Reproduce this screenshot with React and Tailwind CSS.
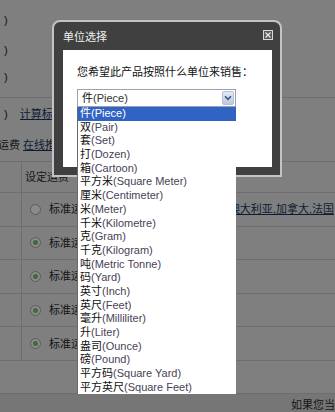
import React from "react";

const units = [
  ["件", "Piece"],
  ["双", "Pair"],
  ["套", "Set"],
  ["打", "Dozen"],
  ["箱", "Cartoon"],
  ["平方米", "Square Meter"],
  ["厘米", "Centimeter"],
  ["米", "Meter"],
  ["千米", "Kilometre"],
  ["克", "Gram"],
  ["千克", "Kilogram"],
  ["吨", "Metric Tonne"],
  ["码", "Yard"],
  ["英寸", "Inch"],
  ["英尺", "Feet"],
  ["毫升", "Milliliter"],
  ["升", "Liter"],
  ["盎司", "Ounce"],
  ["磅", "Pound"],
  ["平方码", "Square Yard"],
  ["平方英尺", "Square Feet"],
];

function Radio({ checked }) {
  return (
    <span className="w-[11px] h-[11px] shrink-0 rounded-full border border-[#5c5c5c] bg-[#8a8a8a] flex items-center justify-center">
      {checked && <span className="w-[5px] h-[5px] rounded-full bg-[#3d6b3d]" />}
    </span>
  );
}

function TableRow({ checked, children }) {
  return (
    <div className="h-[33.6px] border-b border-[#6e6e6e] flex">
      <div className="w-[21px]" />
      <div className="flex-1 border-l border-[#6e6e6e] flex items-center pl-[8px]">
        <Radio checked={checked} />
        <span className="ml-[8px] w-[28px] shrink-0 overflow-hidden whitespace-nowrap">标准运</span>
        {children}
      </div>
    </div>
  );
}

export default function App() {
  return (
    <div
      className="w-[335px] h-[412px] relative overflow-hidden bg-[#7f7f7f] text-[11px] leading-[14px] text-[#141414]"
      style={{ fontFamily: '"Liberation Sans", "Noto Sans CJK SC", sans-serif' }}
    >
      {/* dimmed page underneath */}
      <div className="flex flex-col">
        <div className="h-[97px] flex flex-col pl-[4px]">
          <span className="mt-[13px]">)</span>
          <span className="mt-[16px]">)</span>
          <span className="mt-[13px]">)</span>
        </div>
        <div className="h-[32px] border-t border-[#6e6e6e] flex items-center pl-[4px]">
          <span>)</span>
          <span className="ml-[12px] w-[33px] overflow-hidden underline text-[#0e1c36] whitespace-nowrap">计算标</span>
        </div>
        <div className="h-[32px] flex items-center">
          <span className="ml-[-2px] whitespace-nowrap">运费</span>
          <span className="ml-[3px] w-[30px] overflow-hidden underline text-[#0e1c36] whitespace-nowrap">在线推</span>
        </div>
        <div className="h-[32px] border-t border-b border-[#6e6e6e] flex">
          <div className="w-[21px]" />
          <div className="flex-1 border-l border-[#6e6e6e] flex items-center pl-[3px]">
            <span className="w-[52px] overflow-hidden whitespace-nowrap">设定运费</span>
          </div>
        </div>
        <TableRow checked={false}>
          <span className="ml-auto mr-[1px] underline text-[#0e1c36] whitespace-nowrap">
            澳大利亚,加拿大,法国
          </span>
        </TableRow>
        <TableRow checked />
        <TableRow checked />
        <TableRow checked />
        <TableRow checked />
        <div className="h-[33px] border-b border-[#6e6e6e]" />
        <div className="flex-1 bg-[#767676] h-[20px] flex justify-end items-center pt-[4px]">
          <span className="whitespace-nowrap">如果您当</span>
        </div>
      </div>

      {/* dialog */}
      <div className="absolute left-[52px] top-[20px] w-[230px] h-[157px] border-2 border-[#c4c4c4] rounded-t-[8px] bg-[#404040] flex flex-col pl-[9px] pr-[8px] pb-[8px]">
        <div className="h-[28px] flex items-center justify-between">
          <span className="text-[#f0f0f0] text-[11px] mt-[2px]">单位选择</span>
          <svg width="10" height="10" viewBox="0 0 10 10" className="mr-[-1px] mt-[-2px]">
            <rect x="0.5" y="0.5" width="9" height="9" fill="#5a5a5a" stroke="#d8d8d8" />
            <path d="M2.5 2.5 L7.5 7.5 M7.5 2.5 L2.5 7.5" stroke="#e8e8e8" strokeWidth="1.2" />
          </svg>
        </div>
        <div className="flex-1 bg-white pl-[14px] pt-[15px]">
          <div className="whitespace-nowrap text-[#111]">您希望此产品按照什么单位来销售：</div>
          <div className="mt-[10px] w-[159px] h-[18px] border border-[#9aa3ad] bg-white flex items-center justify-between pl-[4px] pr-[1px]">
            <span className="text-[11px]">
              <span className="text-[#111]">件</span>
              <span className="text-[#333]">(Piece)</span>
            </span>
            <span className="w-[12px] h-[14px] rounded-[2px] border border-[#b1c2db] bg-gradient-to-b from-[#e2eaf6] to-[#bccbe3] flex items-center justify-center">
              <svg width="8" height="6" viewBox="0 0 8 6">
                <path d="M1 1.2 L4 4.4 L7 1.2" fill="none" stroke="#3f5580" strokeWidth="1.6" />
              </svg>
            </span>
          </div>
        </div>
      </div>

      {/* dropdown list */}
      <div className="absolute left-[77px] top-[107px] w-[159px] bg-white border-l border-[#6a6a6a] flex flex-col">
        {units.map(([cn, en], i) => (
          <div
            key={cn}
            className={`h-[13.7px] leading-[13.7px] pl-[2px] whitespace-nowrap text-[11px] ${
              i === 0 ? "bg-[#3063c4] text-white" : ""
            }`}
          >
            <span className={i === 0 ? "" : "text-[#111]"}>{cn}</span>
            <span className={i === 0 ? "" : "text-[#4a4256]"}>({en})</span>
          </div>
        ))}
      </div>
    </div>
  );
}
